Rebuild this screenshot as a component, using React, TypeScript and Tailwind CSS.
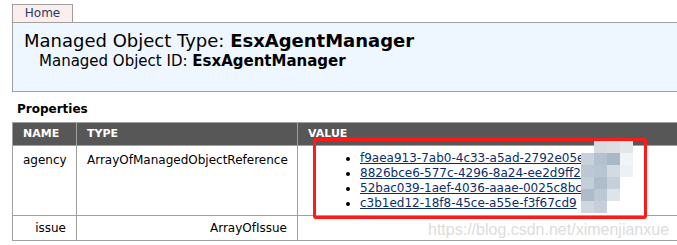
import React from 'react';

const links = [
  'f9aea913-7ab0-4c33-a5ad-2792e05e2',
  '8826bce6-577c-4296-8a24-ee2d9ff2',
  '52bac039-1aef-4036-aaae-0025c8bc',
  'c3b1ed12-18f8-45ce-a55e-f3f67cd9',
];

// pixelated blur patch that hides the rest of the ids
const mosaic = [
  ['', '#d7dbe0', '#dcdee1', '#e4e5e6'],
  ['#c9d1da', '#b4c2d0', '#a9b8c7', '#f1f4f7'],
  ['#bcc7d3', '#b7c4d1', '#d3dae2', '#eef1f4'],
  ['#c4ced9', '#aebdcc', '#c6d0da', '#ffffff'],
  ['#aebcca', '#bcc8d4', '#dfe4ea', '#ffffff'],
  ['#cfd7e0', '#c7d0da', '', ''],
];

function Mosaic() {
  return (
    <svg className="absolute left-[581px] top-[141px]" width="52" height="72" viewBox="0 0 52 72">
      {mosaic.map((row, r) =>
        row.map((c, i) =>
          c ? <rect key={`${r}-${i}`} x={i * 13} y={r * 12} width="13" height="12" fill={c} /> : null
        )
      )}
    </svg>
  );
}

export default function App() {
  return (
    <div className="relative w-[677px] h-[245px] overflow-hidden bg-white text-black" style={{ fontFamily: '"DejaVu Sans", Verdana, sans-serif' }}>
      <div className="pt-[4px] pl-[12px]">
        <div className="w-[61px] h-[18px] border border-[#a0a0a0] border-b-0 bg-[#fdeeee] text-[12px] leading-[16px] text-[#1f3a68] text-center">
          Home
        </div>
        <div className="w-[700px] h-[70px] border border-[#a0a0a0] bg-[#eef6ff] pl-[11px] pt-[7px]">
          <div className="text-[18px] leading-[22px]">
            Managed Object Type: <b>EsxAgentManager</b>
          </div>
          <div className="pl-[15px] text-[15px] leading-[18px]">
            Managed Object ID: <b>EsxAgentManager</b>
          </div>
        </div>
      </div>

      <div className="pl-[17px] pt-[9px] text-[12px] leading-[16px] font-bold">Properties</div>

      <div className="pl-[12px] pt-[5px]">
        <table className="w-[700px] table-fixed border-collapse text-[12px]">
          <thead>
            <tr className="bg-[#575757] text-white text-[11px] font-bold h-[23px]">
              <th className="w-[64px] border border-[#a0a0a0] text-left pl-[10px]">NAME</th>
              <th className="w-[221px] border border-[#a0a0a0] text-left pl-[10px]">TYPE</th>
              <th className="border border-[#a0a0a0] text-left pl-[10px]">VALUE</th>
            </tr>
          </thead>
          <tbody>
            <tr className="h-[70px] align-top">
              <td className="border border-[#a0a0a0] pl-[10px] pt-[5px]">agency</td>
              <td className="border border-[#a0a0a0] pl-[10px] pt-[5px]">ArrayOfManagedObjectReference</td>
              <td className="border border-[#a0a0a0] pt-[5px]">
                <ul className="list-disc pl-[62px] leading-[15px] whitespace-nowrap">
                  {links.map((l) => (
                    <li key={l}>
                      <a href="#" className="text-[#0b2d6b] underline">{l}</a>
                    </li>
                  ))}
                </ul>
              </td>
            </tr>
            <tr className="h-[25px]">
              <td className="border border-[#a0a0a0] text-right pr-[10px]">issue</td>
              <td className="border border-[#a0a0a0] text-right pr-[10px]">ArrayOfIssue</td>
              <td className="border border-[#a0a0a0]"></td>
            </tr>
          </tbody>
        </table>
      </div>

      <Mosaic />
      <div className="absolute left-[313px] top-[138px] w-[334px] h-[81px] border-[3px] border-[#ff1a1a] rounded-[3px]" />
      <div className="absolute left-[428px] top-[221px] text-[16px] leading-[18px] text-[#dcdcdc]" style={{ fontFamily: '"Liberation Sans", Arial, sans-serif' }}>
        https://blog.csdn.net/ximenjianxue
      </div>
    </div>
  );
}
